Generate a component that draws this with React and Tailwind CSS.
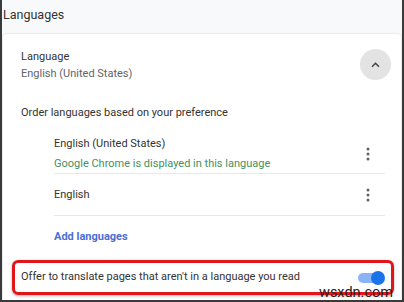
import React from 'react'

const Dots = () => (
  <svg width="4" height="14" viewBox="0 0 4 14" className="text-[#5f6368]">
    <circle cx="2" cy="2" r="1.5" fill="currentColor" />
    <circle cx="2" cy="7" r="1.5" fill="currentColor" />
    <circle cx="2" cy="12" r="1.5" fill="currentColor" />
  </svg>
)

const LangRow = ({ name, note }) => (
  <div className={`flex items-center justify-between pr-[15px] border-b border-[#e8e8e8] ${note ? 'h-[44px] pt-[4px]' : 'h-[42px]'}`}>
    <div>
      <p className="text-[11px] leading-[20px] text-[#333]">{name}</p>
      {note && <p className="text-[11px] leading-[20px] text-[#459061]">{note}</p>}
    </div>
    <Dots />
  </div>
)

const App = () => {
  return (
    <div
      className="w-[404px] h-[302px] overflow-hidden bg-[#f8f9fa] border-l-2 border-r-2 border-b-2 border-[#3a3a3a] relative"
      style={{ fontFamily: 'Roboto, "Liberation Sans", sans-serif' }}
    >
      <div className="h-[34px] flex items-center pl-[1px] pb-[4px]">
        <p className="text-[12.5px] text-[#333]">Languages</p>
      </div>
      <div className="bg-white ml-[1px] mr-[1px] shadow-[0_0_2px_rgba(0,0,0,0.2)] rounded-t-[3px] h-[270px]">
        <div className="flex items-center justify-between pl-[18px] pr-[10px] h-[59px] pt-[2px]">
          <div>
            <p className="text-[11px] leading-[17px] text-[#333]">Language</p>
            <p className="text-[11px] leading-[17px] text-[#5f6368]">English (United States)</p>
          </div>
          <div className="w-[31px] h-[31px] rounded-full bg-[#e3e3e3] flex items-center justify-center">
            <svg width="9" height="6" viewBox="0 0 9 6">
              <path d="M1 4.8 L4.5 1.3 L8 4.8" fill="none" stroke="#444" strokeWidth="1.5" />
            </svg>
          </div>
        </div>
        <div className="pl-[18px] pt-[10px]">
          <p className="text-[11px] leading-[20px] text-[#333]">Order languages based on your preference</p>
        </div>
        <div className="ml-[51px] mr-[16px] mt-[7px]">
          <LangRow name="English (United States)" note="Google Chrome is displayed in this language" />
          <LangRow name="English" />
          <div className="h-[42px] flex items-center">
            <p className="text-[11px] font-bold text-[#4a6fd4]">Add languages</p>
          </div>
        </div>
        <div className="ml-[9px] mr-[7px] mt-[2px] h-[35px] border-[3px] border-[#e0161b] rounded-[6px] flex items-center justify-between pl-[6px] pr-[6px] shadow-[0_1px_3px_rgba(0,0,0,0.3)]">
          <p className="text-[11px] text-[#333]">Offer to translate pages that aren't in a language you read</p>
          <div className="relative w-[27px] h-[14px]">
            <div className="absolute left-0 top-[2px] w-[25px] h-[10px] rounded-full bg-[#8ab4f8]" />
            <div className="absolute right-0 top-0 w-[14px] h-[14px] rounded-full bg-[#1a73e8]" />
          </div>
        </div>
      </div>
      <span className="absolute right-[9px] bottom-[-4px] text-[14.5px] text-[#222]">wsxdn.com</span>
    </div>
  )
}

export default App
